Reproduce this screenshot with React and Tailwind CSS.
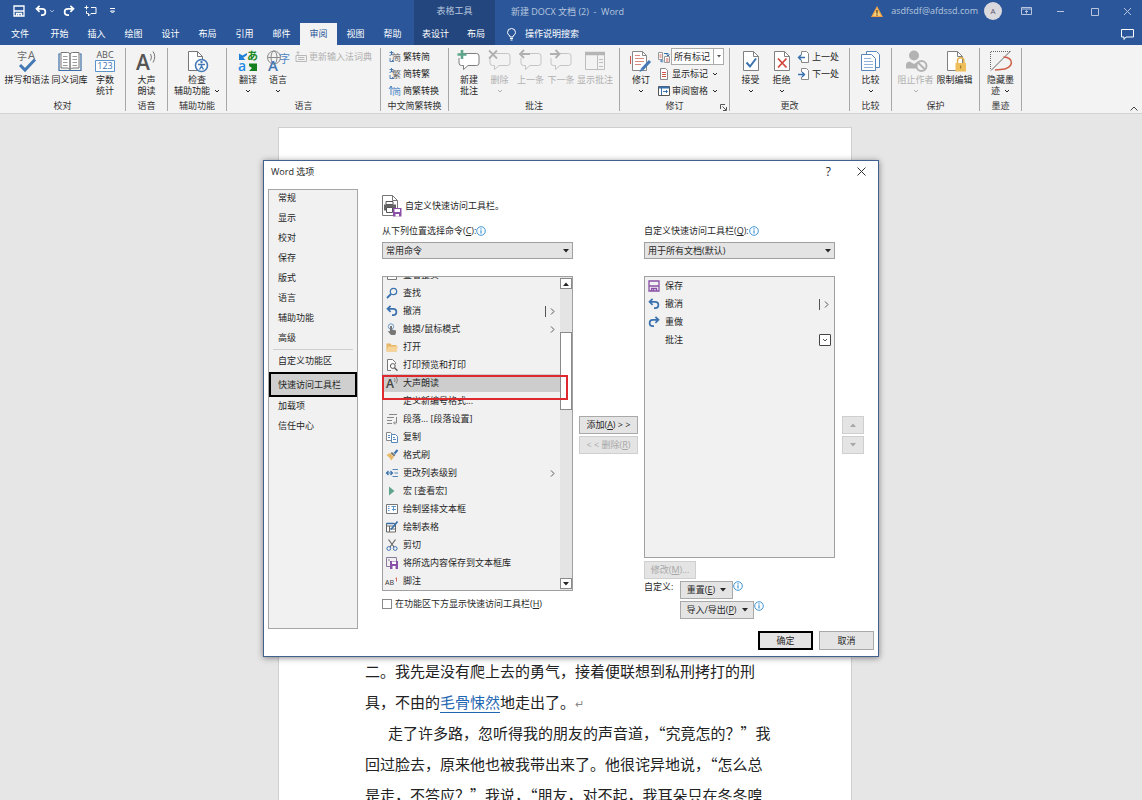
import React, { useState } from 'react';

/* ---------- small shared icons ---------- */

const Chevron = ({ className = '' }) => (
  <svg width="6" height="4" viewBox="0 0 6 4" className={className} fill="none" stroke="currentColor">
    <path d="M1 1l2 2 2-2" />
  </svg>
);

const Triangle = ({ up = false, className = '' }) => (
  <svg width="6" height="4" viewBox="0 0 6 4" className={className} fill="currentColor">
    <path d={up ? 'M0 4l3-3.5L6 4z' : 'M0 0l3 3.5L6 0z'} />
  </svg>
);

const InfoIcon = () => (
  <svg width="10" height="10" viewBox="0 0 10 10" fill="none" stroke="#2b8ad0">
    <circle cx="5" cy="5" r="4.3" strokeWidth="0.9" />
    <path d="M5 4.3V7.6M5 2.3v1.1" strokeWidth="1.1" />
  </svg>
);

const UndoIcon = ({ color = '#3a72b0', flip = false }) => (
  <svg width="12" height="12" viewBox="0 0 12 12" fill="none" stroke={color} strokeWidth="1.7">
    <path
      d="M4.600 0.800L1.500 3.800l3.100 3M1.800 3.800h5.400a3.100 3.100 0 0 1 0 6.400H6"
      transform={flip ? 'translate(12 0) scale(-1 1)' : undefined}
    />
  </svg>
);

const SaveIcon = ({ color }) => (
  <svg width="12" height="12" viewBox="0 0 12 12" fill="none" stroke={color} strokeWidth="1.3">
    <path d="M1 1h10v10H1zM1 6h10M3.500 11V8.500h5V11" />
    <path d="M5.500 9v2" />
  </svg>
);

/* ---------- ribbon icons ---------- */

const SpellIcon = () => (
  <svg width="24" height="24" viewBox="0 0 24 24">
    <text x="2" y="10" fontSize="10" fill="#6a6a6a">字</text>
    <text x="13" y="9" fontSize="11" fill="#6a6a6a">A</text>
    <path d="M5 15l5 5L20 9.500" fill="none" stroke="#4479b5" strokeWidth="3" />
  </svg>
);

const ThesaurusIcon = () => (
  <svg width="24" height="24" viewBox="0 0 24 24" fill="none">
    <path d="M2.500 4h-1.500v16.500h22V4h-1.500" stroke="#3f6fa8" strokeWidth="1.200" />
    <path d="M3 2.500h6.500q2.500 0 2.500 2V19.500q-1-1.500-3-1.500H3zM21 2.500h-6.500q-2.500 0-2.500 2V19.500q1-1.500 3-1.500H21z" fill="#fff" stroke="#777" />
    <path d="M5 6.500h4.500M5 9.500h4.500M5 12.500h4.500M5 15.500h4.500M14.500 6.500H19M14.500 9.500H19M14.500 12.500H19M14.500 15.500H19" stroke="#9a9a9a" />
  </svg>
);

const WordCountIcon = () => (
  <svg width="24" height="24" viewBox="0 0 24 24">
    <text x="12" y="8" fontSize="9" textAnchor="middle" fill="#555">ABC</text>
    <path d="M2.500 10.500h19v11h-19z" fill="#fff" stroke="#5b93cc" />
    <text x="12" y="19" fontSize="9" textAnchor="middle" fill="#3a72b0">123</text>
  </svg>
);

const ReadAloudIcon = () => (
  <svg width="24" height="24" viewBox="0 0 24 24">
    <text x="1" y="20" fontSize="21" fontWeight="600" fill="#555">A</text>
    <path d="M15.500 4q2 3 0 6.500M18 1.500q3.500 5 0 11" fill="none" stroke="#777" />
  </svg>
);

const AccessibilityIcon = () => (
  <svg width="24" height="24" viewBox="0 0 24 24" fill="none">
    <path d="M3.500 1.500h9l5 5v14h-14z" fill="#fff" stroke="#777" />
    <path d="M12.500 1.500v5h5" stroke="#777" />
    <circle cx="16.500" cy="15.500" r="6" fill="#fff" stroke="#4479b5" strokeWidth="1.600" />
    <circle cx="16.500" cy="12" r="1.200" fill="#4479b5" />
    <path d="M13 14.500h7M16.500 14.500v2M16.500 16l-2 3.500M16.500 16l2 3.500" stroke="#4479b5" strokeWidth="1.400" />
  </svg>
);

const TranslateIcon = () => (
  <svg width="24" height="24" viewBox="0 0 24 24">
    <path d="M3 3.500V10h6.500L7.200 7.700 11 5V3L6.500 5.500z" fill="#1f7fd4" />
    <text x="11" y="10" fontSize="11" fontWeight="700" fill="#1e8a28">あ</text>
    <text x="2" y="21" fontSize="14" fontWeight="600" fill="#1f8be6">a</text>
    <path d="M13 13.500h8v7.500h-8l3-3-3-2z" fill="#16801f" />
  </svg>
);

const LanguageIcon = () => (
  <svg width="26" height="24" viewBox="0 0 26 24">
    <g fill="none" stroke="#8a8a8a">
      <circle cx="9" cy="7.500" r="6.500" />
      <ellipse cx="9" cy="7.500" rx="3" ry="6.500" />
      <path d="M2.500 7.500h13" />
    </g>
    <text x="14" y="13" fontSize="11" fill="#4a86c5">字</text>
    <text x="3" y="21" fontSize="15" fontWeight="600" fill="#4479b5">A</text>
  </svg>
);

const Bubble = ({ muted, children }) => (
  <svg width="24" height="24" viewBox="0 0 24 24" fill="none">
    <path
      d="M5.500 3.500h14q2.500 0 2.500 2.500v7q0 2.500-2.500 2.500H11l-4.500 4v-4H4.500Q2 15.500 2 13V8"
      fill={muted ? '#f3f3f3' : '#fff'}
      stroke={muted ? '#c4c4c4' : '#7d7d7d'}
    />
    {children}
  </svg>
);

const NewCommentIcon = () => (
  <Bubble>
    <path d="M5 0v9M0.500 4.500h9" stroke="#5fa58b" strokeWidth="2.600" />
  </Bubble>
);

const DeleteCommentIcon = () => (
  <Bubble muted>
    <path d="M1 0.500l8 8M9 0.500l-8 8" stroke="#b0b0b0" strokeWidth="1.800" />
  </Bubble>
);

const PrevCommentIcon = () => (
  <Bubble muted>
    <path d="M5 0L1 4l4 4M1.500 4H11" stroke="#b0b0b0" strokeWidth="1.800" />
  </Bubble>
);

const NextCommentIcon = () => (
  <Bubble muted>
    <path d="M6.500 0l4 4-4 4M10 4H1" stroke="#b0b0b0" strokeWidth="1.800" />
  </Bubble>
);

const ShowCommentsIcon = () => (
  <svg width="24" height="24" viewBox="0 0 24 24" fill="none" stroke="#bdbdbd">
    <path d="M2.500 2.500h19v17h-19z" />
    <path d="M2 3.500h20" strokeWidth="3.500" stroke="#b5b5b5" />
    <path d="M14.500 5v14M16 9.500h4M16 12.500h4M16 16.500h4" />
  </svg>
);

const TrackIcon = () => (
  <svg width="24" height="24" viewBox="0 0 24 24" fill="none">
    <path d="M3.500 1.500h10l4 4v15h-14z" fill="#fff" stroke="#888" />
    <path d="M13.500 1.500v4h4" stroke="#888" />
    <path d="M6 5.500h5M6 8.500h9M6 11.500h9M6 14.500h6" stroke="#d98a80" />
    <path d="M1.500 6v8" stroke="#d0564a" />
    <path d="M21 11l-8 8.500" stroke="#4479b5" strokeWidth="3" />
    <path d="M12 18.500l-1.500 3.500 3.500-1.500z" fill="#4479b5" />
  </svg>
);

const SheetIcon = ({ children }) => (
  <svg width="24" height="24" viewBox="0 0 24 24" fill="none">
    <path d="M4.500 1.500h10l5 5v14h-15z" fill="#fff" stroke="#808080" />
    <path d="M14.500 1.500v5h5" stroke="#808080" />
    {children}
  </svg>
);

const AcceptIcon = () => (
  <SheetIcon>
    <path d="M7.500 12.500l3.500 4 6-8" stroke="#3a72b0" strokeWidth="2" />
  </SheetIcon>
);

const RejectIcon = () => (
  <SheetIcon>
    <path d="M8 8.500l8.500 9M16.500 8.500l-8.500 9" stroke="#d0493c" strokeWidth="1.800" />
  </SheetIcon>
);

const CompareIcon = () => (
  <svg width="24" height="24" viewBox="0 0 24 24" fill="none" stroke="#5587bd">
    <path d="M7.500 1.500h10l3 3v13h-13z" fill="#fff" />
    <path d="M2.500 4.500h10l4 4v12h-14z" fill="#fff" />
    <path d="M5 8.500h7M5 11.500h9M5 14.500h9M5 17.500h9" stroke="#8fb3d9" />
  </svg>
);

const BlockAuthorsIcon = () => (
  <svg width="24" height="24" viewBox="0 0 24 24">
    <circle cx="10" cy="5.500" r="5" fill="#b3b3b3" />
    <path d="M2 18.500V15q0-3 3.500-3.500l4.500 2.500 4-2.500q2 0 3 2v5z" fill="#b3b3b3" />
    <circle cx="17.500" cy="16" r="5" fill="#f3f3f3" stroke="#b3b3b3" strokeWidth="2" />
    <path d="M14 12.500l7 7" stroke="#b3b3b3" strokeWidth="2" />
  </svg>
);

const RestrictIcon = () => (
  <SheetIcon>
    <path d="M12.500 13H23v8.500H12.500z" fill="#eebf5b" />
    <path d="M14.500 13v-2a3.200 3.200 0 0 1 6.400 0V13" stroke="#e3b04b" strokeWidth="1.500" />
    <path d="M17.700 15.500v3" stroke="#8a6a20" />
  </SheetIcon>
);

const HideInkIcon = () => (
  <svg width="24" height="24" viewBox="0 0 24 24" fill="none">
    <path d="M1.500 19V1.500H21" stroke="#666" strokeDasharray="1 1" />
    <path d="M21.500 1L2 20.500" stroke="#666" />
    <path d="M14.500 7c11 0 11 12-3 12.500L6 20" stroke="#d0604a" strokeWidth="1.600" />
  </svg>
);

/* a character with a small arrow that bends in from the left */
const ConvertIcon = ({ char }) => (
  <svg width="12" height="12" viewBox="0 0 12 12">
    <text x="3" y="10" fontSize="9" fill="#666">{char}</text>
    <path d="M0.500 1.500h4M2.500 0v4M0.500 4.500L4 3M1 7v3.500h3.500M3 9l1.500 1.500" fill="none" stroke="#3a72b0" strokeWidth="0.900" />
  </svg>
);

const BothConvertIcon = () => (
  <svg width="12" height="12" viewBox="0 0 12 12">
    <text x="3" y="10" fontSize="9" fill="#4a86c5">简</text>
    <path d="M2 1v9M0 4l2-3 1.500 3" fill="none" stroke="#4a86c5" />
  </svg>
);

const MarkupIcon = () => (
  <svg width="12" height="12" viewBox="0 0 12 12" fill="none">
    <path d="M0.500 1.500h4v7h-4zM6.500 5.500h5v6h-5z" fill="#fff" stroke="#999" />
    <path d="M1.500 4h2M1.500 6h2M8 8h2.500M8 10h2.500" stroke="#d0564a" />
    <path d="M6 2.500h4v2M8.500 3.500l1.500 1.500 1.500-1.500M5.500 10H3M4 8.500L2.500 10 4 11.500" stroke="#3a72b0" />
  </svg>
);

const ShowMarkupIcon = () => (
  <svg width="12" height="12" viewBox="0 0 12 12" fill="none">
    <path d="M2.500 0.500h5l2 2v9h-7z" fill="#fff" stroke="#888" />
    <path d="M4 4.500h4M4 6.500h4M4 8.500h4" stroke="#d0564a" />
  </svg>
);

const PaneIcon = () => (
  <svg width="12" height="12" viewBox="0 0 12 12" fill="none">
    <path d="M0.500 1.500h11v9H0.500z" fill="#fff" stroke="#555" />
    <path d="M1 2.500h10" stroke="#3a72b0" strokeWidth="2" />
    <path d="M3.500 3v7M5 6.500h4.500M8 5l1.500 1.500L8 8" stroke="#3a72b0" />
  </svg>
);

const ChangeStepIcon = ({ next = false }) => (
  <svg width="12" height="12" viewBox="0 0 12 12" fill="none">
    <path d="M3.500 4V0.500h5l2 2v9h-7V9" fill="#fff" stroke="#888" />
    <path d={next ? 'M0 6.500h6M4 4l2.500 2.500L4 9' : 'M7 6.500H1M3 4L0.500 6.500 3 9'} stroke="#3a72b0" strokeWidth="1.400" />
  </svg>
);

const ImeIcon = () => (
  <svg width="12" height="12" viewBox="0 0 12 12" fill="none" stroke="#b8b8b8">
    <path d="M1 4.500h10.500v6H1zM3 6.500h6.500M3 8.500h6.500M3 4V1M1.500 2L3 0.500 4.500 2" />
  </svg>
);

/* ---------- ribbon parts ---------- */

const BigButton = ({ icon, lines, width, drop, inlineDrop, disabled }) => (
  <button
    disabled={disabled}
    className={`flex ${width} shrink-0 flex-col items-center whitespace-nowrap leading-[11px] ${disabled ? 'text-[#b1b1b1]' : 'text-[#262626]'}`}
  >
    <span className="flex h-[26px] items-end">{icon}</span>
    {lines.map((line, i) => (
      <span key={line} className="flex items-center gap-1">
        {line}
        {inlineDrop && i === lines.length - 1 && <Chevron />}
      </span>
    ))}
    {drop && <Chevron className="mt-[4px]" />}
  </button>
);

const SmallButton = ({ icon, label, drop, disabled }) => (
  <button
    disabled={disabled}
    className={`flex h-[17px] items-center gap-[2px] whitespace-nowrap ${disabled ? 'text-[#b1b1b1]' : 'text-[#262626]'}`}
  >
    {icon}
    <span>{label}</span>
    {drop && <Chevron className="ml-[2px]" />}
  </button>
);

const Group = ({ label, width, launcher, children }) => (
  <section className={`relative flex h-[63px] ${width} shrink-0 flex-col border-r border-[#a8a8a8]`}>
    <div className="flex flex-1 items-start">{children}</div>
    <div className="h-[10px] whitespace-nowrap text-center leading-[10px] text-[#333]">{label}</div>
    {launcher && (
      <button aria-label="修订选项" className="absolute right-[2px] bottom-0 text-[#555]">
        <svg width="7" height="7" viewBox="0 0 7 7" fill="none" stroke="currentColor">
          <path d="M0.500 5V0.500H5M2.500 2.500L6 6M6.500 3v3.500H3" />
        </svg>
      </button>
    )}
  </section>
);

const Ribbon = () => (
  <div className="flex h-[69px] border-b border-[#d2d2d2] bg-[#f3f3f3] pt-[3px]">
    <Group label="校对" width="w-[126px]">
      <div className="flex pl-[5px]">
        <BigButton icon={<SpellIcon />} lines={['拼写和语法']} width="w-[44px]" />
        <BigButton icon={<ThesaurusIcon />} lines={['同义词库']} width="w-[41px]" />
        <BigButton icon={<WordCountIcon />} lines={['字数', '统计']} width="w-[30px]" />
      </div>
    </Group>
    <Group label="语音" width="w-[42px]">
      <BigButton icon={<ReadAloudIcon />} lines={['大声', '朗读']} width="w-full" />
    </Group>
    <Group label="辅助功能" width="w-[59px]">
      <BigButton icon={<AccessibilityIcon />} lines={['检查', '辅助功能']} width="w-full" inlineDrop />
    </Group>
    <Group label="语言" width="w-[154px]">
      <div className="flex pl-[6px]">
        <BigButton icon={<TranslateIcon />} lines={['翻译']} width="w-[30px]" drop />
        <BigButton icon={<LanguageIcon />} lines={['语言']} width="w-[30px]" drop />
        <div className="pl-[2px]">
          <SmallButton icon={<ImeIcon />} label="更新输入法词典" disabled />
        </div>
      </div>
    </Group>
    <Group label="中文简繁转换" width="w-[68px]">
      <div className="flex flex-col pl-[8px]">
        <SmallButton icon={<ConvertIcon char="简" />} label="繁转简" />
        <SmallButton icon={<ConvertIcon char="繁" />} label="简转繁" />
        <SmallButton icon={<BothConvertIcon />} label="简繁转换" />
      </div>
    </Group>
    <Group label="批注" width="w-[171px]">
      <div className="flex pl-[5px]">
        <BigButton icon={<NewCommentIcon />} lines={['新建', '批注']} width="w-[30px]" />
        <BigButton icon={<DeleteCommentIcon />} lines={['删除']} width="w-[31px]" drop disabled />
        <BigButton icon={<PrevCommentIcon />} lines={['上一条']} width="w-[31px]" disabled />
        <BigButton icon={<NextCommentIcon />} lines={['下一条']} width="w-[30px]" disabled />
        <BigButton icon={<ShowCommentsIcon />} lines={['显示批注']} width="w-[38px]" disabled />
      </div>
    </Group>
    <Group label="修订" width="w-[110px]" launcher>
      <div className="flex pl-[6px]">
        <BigButton icon={<TrackIcon />} lines={['修订']} width="w-[30px]" drop />
        <div className="flex flex-col pl-[2px]">
          <div className="flex h-[17px] items-center gap-[1px]">
            <MarkupIcon />
            <div className="relative">
              <select aria-label="标记显示方式" className="h-[17px] w-[53px] appearance-none border border-[#ababab] bg-white pl-[2px] text-[#262626]">
                <option>所有标记</option>
              </select>
              <span className="pointer-events-none absolute inset-y-0 right-0 flex w-[11px] items-center justify-center border-l border-[#ababab] text-[#555]">
                <svg width="4" height="3" viewBox="0 0 4 3" fill="currentColor">
                  <path d="M0 0h4L2 2.500z" />
                </svg>
              </span>
            </div>
          </div>
          <SmallButton icon={<ShowMarkupIcon />} label="显示标记" drop />
          <SmallButton icon={<PaneIcon />} label="审阅窗格" drop />
        </div>
      </div>
    </Group>
    <Group label="更改" width="w-[120px]">
      <div className="flex pl-[5px]">
        <BigButton icon={<AcceptIcon />} lines={['接受']} width="w-[31px]" drop />
        <BigButton icon={<RejectIcon />} lines={['拒绝']} width="w-[31px]" drop />
        <div className="flex flex-col pl-[1px]">
          <SmallButton icon={<ChangeStepIcon />} label="上一处" />
          <SmallButton icon={<ChangeStepIcon next />} label="下一处" />
        </div>
      </div>
    </Group>
    <Group label="比较" width="w-[42px]">
      <BigButton icon={<CompareIcon />} lines={['比较']} width="w-full" drop />
    </Group>
    <Group label="保护" width="w-[88px]">
      <div className="flex pl-[4px]">
        <BigButton icon={<BlockAuthorsIcon />} lines={['阻止作者']} width="w-[39px]" drop disabled />
        <BigButton icon={<RestrictIcon />} lines={['限制编辑']} width="w-[39px]" />
      </div>
    </Group>
    <Group label="墨迹" width="w-[42px]">
      <BigButton icon={<HideInkIcon />} lines={['隐藏墨', '迹']} width="w-full" inlineDrop />
    </Group>
    <button aria-label="折叠功能区" className="mt-auto mr-[4px] mb-[2px] ml-auto text-[#444]">
      <svg width="8" height="5" viewBox="0 0 8 5" fill="none" stroke="currentColor">
        <path d="M0.500 4.500L4 1l3.500 3.500" />
      </svg>
    </button>
  </div>
);

/* ---------- title bar and tabs ---------- */

const TABS = ['开始', '插入', '绘图', '设计', '布局', '引用', '邮件', '审阅', '视图', '帮助'];

const TitleBar = () => (
  <div className="flex h-[23px] items-center text-[#b7c6de]">
    <div className="flex w-[414px] shrink-0 items-center pb-[2px] pl-[13px] text-white">
      <button aria-label="保存"><SaveIcon color="#fff" /></button>
      <button aria-label="撤消" className="ml-[10px]"><UndoIcon color="#fff" /></button>
      <Chevron className="ml-[2px] text-[#9db3d6]" />
      <button aria-label="重做" className="ml-[8px]"><UndoIcon color="#fff" flip /></button>
      <button aria-label="新建批注" className="ml-[9px]">
        <svg width="13" height="12" viewBox="0 0 13 12" fill="none" stroke="#fff">
          <path d="M7 2.500h5v6H7l-2.500 2.500V8.500H2.500V6M2.500 0.500v4M0.500 2.500h4" />
        </svg>
      </button>
      <button aria-label="自定义快速访问工具栏" className="ml-[13px]">
        <svg width="5" height="6" viewBox="0 0 5 6" fill="none" stroke="#fff">
          <path d="M0 0.500h5M0.500 3l2 2 2-2z" />
        </svg>
      </button>
    </div>
    <div className="flex h-full w-[81px] shrink-0 items-center justify-center bg-[#23467f] pb-[2px]">表格工具</div>
    <h1 className="ml-4 whitespace-pre">新建 DOCX 文档 (2)  -  Word</h1>
    <div className="ml-auto flex items-center pb-[1px]">
      <svg width="12" height="11" viewBox="0 0 12 11">
        <path d="M6 0l6 11H0z" fill="#efa044" />
        <path d="M6 2.500l4 7.500H2z" fill="#f7cf7a" />
        <path d="M6 4v3.500M6 8.500v1.200" stroke="#4a3210" strokeWidth="1.200" />
      </svg>
      <span className="ml-[8px]">asdfsdf@afdssd.com</span>
      <span className="ml-[6px] flex h-[18px] w-[18px] items-center justify-center rounded-full bg-[#d9d9de] text-[8px] text-[#5f5670]">A</span>
      <button aria-label="功能区显示选项" className="ml-[19px]">
        <svg width="11" height="8" viewBox="0 0 11 8" fill="none" stroke="#b7c6de">
          <path d="M0.500 0.500h10v7H0.500zM0.500 2h10M5.500 6.500V3.500M4 5l1.500-1.500L7 5" />
        </svg>
      </button>
      <button aria-label="最小化" className="ml-[24px]">
        <svg width="9" height="9" viewBox="0 0 9 9" stroke="#b7c6de"><path d="M1 4.500h7" /></svg>
      </button>
      <button aria-label="最大化" className="ml-[25px]">
        <svg width="9" height="9" viewBox="0 0 9 9" fill="none" stroke="#b7c6de"><path d="M1.500 1.500h7v7h-7z" /></svg>
      </button>
      <button aria-label="关闭" className="mr-[10px] ml-[24px]">
        <svg width="9" height="9" viewBox="0 0 9 9" stroke="#b7c6de"><path d="M1 1l7 7M8 1L1 8" /></svg>
      </button>
    </div>
  </div>
);

const TabBar = () => {
  const [active, setActive] = useState('审阅');

  return (
    <nav className="flex h-[22px] text-white">
      <button className="w-[41px] pl-[11px] text-left">文件</button>
      {TABS.map((tab) => (
        <button
          key={tab}
          onClick={() => setActive(tab)}
          className={`w-[37px] ${active === tab ? 'bg-[#f3f3f3] text-[#2b579a]' : ''}`}
        >
          {tab}
        </button>
      ))}
      <div className="ml-[3px] flex w-[81px] bg-[#23467f]">
        <button className="w-[43px]">表设计</button>
        <button className="w-[38px]">布局</button>
      </div>
      <button className="ml-[12px] flex items-center gap-[9px]">
        <svg width="9" height="13" viewBox="0 0 9 13" fill="none" stroke="#fff">
          <path d="M3 9V8Q0.500 6.500 0.500 4.500a4 4 0 0 1 8 0Q8.500 6.500 6 8v1zM3 10.500h3M3.500 12h2" />
        </svg>
        操作说明搜索
      </button>
      <button aria-label="批注" className="mr-[8px] ml-auto">
        <svg width="13" height="11" viewBox="0 0 13 11" fill="none" stroke="#fff">
          <path d="M0.500 0.500h12v7.500H5l-2 2.500V8H0.500z" />
        </svg>
      </button>
    </nav>
  );
};

/* ---------- dialog icons ---------- */

const ListSvg = ({ children }) => (
  <svg width="12" height="12" viewBox="0 0 12 12" fill="none">{children}</svg>
);

const LIST_ICONS = {
  page: (
    <ListSvg><path d="M1.500 1.500h9v9h-9z" fill="#fff" stroke="#777" /></ListSvg>
  ),
  find: (
    <ListSvg>
      <circle cx="7.500" cy="4.500" r="3.200" stroke="#3a72b0" strokeWidth="1.200" />
      <path d="M5 7l-4 4" stroke="#3a72b0" strokeWidth="1.800" />
    </ListSvg>
  ),
  undo: <UndoIcon />,
  redo: <UndoIcon flip />,
  save: <SaveIcon color="#8a4fa8" />,
  touch: (
    <ListSvg>
      <circle cx="5" cy="3.500" r="2.700" stroke="#6b9ccc" />
      <path d="M4 3h2v3.500l4 1V10l-1 2H5L2 8.500l1-.7 1 .7z" fill="#777" />
    </ListSvg>
  ),
  open: (
    <ListSvg>
      <path d="M0.500 10.500v-8h4l1 1.500h5v6.500z" fill="#e6b566" />
      <path d="M0.500 10.500L2 5.500h10l-1.500 5z" fill="#f6d396" />
    </ListSvg>
  ),
  preview: (
    <ListSvg>
      <path d="M5 11.500H1.500v-11h5l3 3V5" fill="#fff" stroke="#777" />
      <circle cx="6.800" cy="7" r="2.400" fill="#fff" stroke="#555" />
      <path d="M8.500 8.700l3 3" stroke="#555" strokeWidth="1.300" />
    </ListSvg>
  ),
  read: (
    <ListSvg>
      <text x="0" y="11" fontSize="12" fontWeight="600" fill="#444">A</text>
      <path d="M8.500 1.500q1.200 1.500 0 3.500M10.300 0q2.200 3 0 6.500" stroke="#777" strokeWidth="0.900" />
    </ListSvg>
  ),
  paragraph: (
    <ListSvg>
      <path d="M3 1.500h8M1 4.500h7M1 7.500h5M1 10.500h5M10.500 4v6H8M9 8.500L7.500 10 9 11.500" stroke="#888" />
    </ListSvg>
  ),
  copy: (
    <ListSvg>
      <path d="M0.500 1.500h4l2 2v6h-6z" fill="#fff" stroke="#888" />
      <path d="M5.500 3.500h4l2 2v6h-6z" fill="#fff" stroke="#5587bd" />
      <path d="M7 6.500h2M7 8.500h3M2 4.500h2M2 6.500h2" stroke="#5587bd" />
    </ListSvg>
  ),
  painter: (
    <ListSvg>
      <path d="M0.500 6L4 4l4 4-3 3.500q-1-3-4.500-5.500z" fill="#e9b968" />
      <path d="M4.500 4l3.500 3.500 1.500-1.500-3.500-3z" fill="#777" />
      <path d="M8.500 4.500L11.500 1" stroke="#3a72b0" strokeWidth="2" />
    </ListSvg>
  ),
  level: (
    <ListSvg>
      <path d="M0.500 6h6M2.500 4L0.500 6l2 2M4.500 4l2 2-2 2" stroke="#3a72b0" strokeWidth="1.200" />
      <path d="M6.500 2.500H12M8.500 6H12M6.500 9.500H12" stroke="#5587bd" />
    </ListSvg>
  ),
  macro: (
    <ListSvg><path d="M3 1.500L8.500 6 3 10.500z" fill="#5fa58b" /></ListSvg>
  ),
  textbox: (
    <ListSvg>
      <path d="M0.500 1.500h11v9H0.500z" fill="#fff" stroke="#777" />
      <path d="M5.500 3.500h4.500M7.500 3.500v4.500M6 6.500h4M2 3.500h1.500M2 5.500h1.500M2 7.500h1.500" stroke="#5b93cc" />
    </ListSvg>
  ),
  table: (
    <ListSvg>
      <path d="M0.500 2.500h9v8.500h-9zM0.500 5h9M3.500 5v6M3.500 8h6" fill="#fff" stroke="#666" />
      <path d="M0.500 2.500h7" stroke="#3a72b0" strokeWidth="1.600" />
      <path d="M11.500 0.500L5 8.500" stroke="#3a72b0" strokeWidth="1.800" />
    </ListSvg>
  ),
  cut: (
    <ListSvg>
      <path d="M2.500 0.500L8 8M9.500 0.500L4 8" stroke="#666" strokeWidth="1.200" />
      <circle cx="2.800" cy="9.500" r="1.900" stroke="#3a72b0" />
      <circle cx="9.200" cy="9.500" r="1.900" stroke="#3a72b0" />
    </ListSvg>
  ),
  gallery: (
    <ListSvg>
      <path d="M0.500 0.500h10v9H0.500zM2 3h2" stroke="#8a7a99" />
      <path d="M4 4h8v8H4z" fill="#8a4fa8" />
      <path d="M6 4.500h4v2.500H6zM6.500 9h3v3h-3z" fill="#fff" />
    </ListSvg>
  ),
  footnote: (
    <ListSvg>
      <text x="-1" y="10" fontSize="7" fill="#333">AB</text>
      <path d="M10.500 3v3.500M9.500 3.500l1-.7" stroke="#d0564a" strokeWidth="0.900" />
    </ListSvg>
  ),
};

/* ---------- dialog parts ---------- */

const COMMANDS = [
  { label: '查看整页', icon: 'page' },
  { label: '查找', icon: 'find' },
  { label: '撤消', icon: 'undo', split: true, more: true },
  { label: '触摸/鼠标模式', icon: 'touch', more: true },
  { label: '打开', icon: 'open' },
  { label: '打印预览和打印', icon: 'preview' },
  { label: '大声朗读', icon: 'read' },
  { label: '定义新编号格式...' },
  { label: '段落... [段落设置]', icon: 'paragraph' },
  { label: '复制', icon: 'copy' },
  { label: '格式刷', icon: 'painter' },
  { label: '更改列表级别', icon: 'level', more: true },
  { label: '宏 [查看宏]', icon: 'macro' },
  { label: '绘制竖排文本框', icon: 'textbox' },
  { label: '绘制表格', icon: 'table' },
  { label: '剪切', icon: 'cut' },
  { label: '将所选内容保存到文本框库', icon: 'gallery' },
  { label: '脚注', icon: 'footnote' },
];

const TOOLBAR_ITEMS = [
  { label: '保存', icon: 'save' },
  { label: '撤消', icon: 'undo', split: true, more: true },
  { label: '重做', icon: 'redo' },
  { label: '批注', drop: true },
];

const CommandRow = ({ item, selected, onClick }) => (
  <li className="shrink-0">
    <button
      onClick={onClick}
      className={`flex h-[18px] w-full items-center pr-[3px] pl-[2px] text-left ${selected ? 'bg-[#cdcdcd]' : ''}`}
    >
      <span className="flex w-[14px] shrink-0 justify-center">{item.icon && LIST_ICONS[item.icon]}</span>
      <span className="ml-[4px] flex-1 whitespace-nowrap">{item.label}</span>
      {item.split && <span className="mr-[3px] h-[11px] w-px bg-[#555]" />}
      {item.more && (
        <svg width="7" height="7" viewBox="0 0 7 7" fill="none" stroke="#555" className="mr-[1px]">
          <path d="M2 0.500l3 3-3 3" />
        </svg>
      )}
      {item.drop && (
        <span className="flex h-[12px] w-[12px] items-center justify-center rounded-[1px] border border-[#444] bg-white">
          <Chevron className="text-[#555]" />
        </span>
      )}
    </button>
  </li>
);

const GrayButton = ({ disabled, className = '', children, ...rest }) => (
  <button
    disabled={disabled}
    className={`flex h-[18px] items-center justify-center whitespace-nowrap border ${
      disabled ? 'border-[#cfcfcf] bg-[#e4e4e4] text-[#a8a8a8]' : 'border-[#a9a9a9] bg-[#e4e4e4] text-[#262626]'
    } ${className}`}
    {...rest}
  >
    {children}
  </button>
);

const LabeledSelect = ({ id, label, accel, value }) => (
  <>
    <div className="flex h-4 items-center whitespace-nowrap">
      <label htmlFor={id}>{label}(<u>{accel}</u>):</label>
      <InfoIcon />
    </div>
    <div className="relative mt-[3px]">
      <select id={id} className="block h-[17px] w-full appearance-none border border-[#a0a0a0] bg-[#e4e4e4] pl-[3px]">
        <option>{value}</option>
      </select>
      <Triangle className="pointer-events-none absolute top-[7px] right-[4px]" />
    </div>
  </>
);

const SECTIONS = ['常规', '显示', '校对', '保存', '版式', '语言', '辅助功能', '高级'];

const Sidebar = () => (
  <aside className="ml-[4px] h-[440px] w-[90px] shrink-0 border border-[#a6a6a6] bg-[#f1f1f1]">
    <ul className="flex flex-col gap-1">
      {SECTIONS.map((name) => (
        <li key={name} className="flex h-4">
          <button className="pl-[9px]">{name}</button>
        </li>
      ))}
    </ul>
    <hr className="mx-[4px] mt-[3px] border-[#cfcfcf]" />
    <button className="mt-[3px] block h-4 pl-[9px]">自定义功能区</button>
    <button className="mt-[3px] block h-[25px] w-full border-2 border-black bg-[#cfcfcf] pl-[7px] text-left">快速访问工具栏</button>
    <ul className="mt-[1px] flex flex-col gap-1">
      <li className="flex h-4"><button className="pl-[9px]">加载项</button></li>
      <li className="flex h-4"><button className="pl-[9px]">信任中心</button></li>
    </ul>
  </aside>
);

const CommandList = () => {
  const [selected, setSelected] = useState('大声朗读');

  return (
    <div className="relative mt-[17px] flex h-[315px] border border-[#a0a0a0] bg-[#f1f1f1]">
      <ul className="flex flex-1 flex-col justify-end overflow-hidden">
        {COMMANDS.map((item) => (
          <CommandRow key={item.label} item={item} selected={selected === item.label} onClick={() => setSelected(item.label)} />
        ))}
      </ul>
      <div className="flex w-[12px] flex-col bg-[#e4e4e4] py-[1px]">
        <button aria-label="向上滚动" className="flex h-[11px] items-center justify-center border border-[#8a8a8a] bg-white">
          <Triangle up />
        </button>
        <div className="mt-[43px] h-[78px] border border-[#8a8a8a] bg-white" />
        <button aria-label="向下滚动" className="mt-auto flex h-[11px] items-center justify-center border border-[#8a8a8a] bg-white">
          <Triangle />
        </button>
      </div>
      {/* highlight frame round the selected command */}
      <div className="pointer-events-none absolute top-[98px] -left-px h-[25px] w-[186px] border-2 border-[#dc2a2f]" />
    </div>
  );
};

const OptionsDialog = () => (
  <div
    role="dialog"
    aria-label="Word 选项"
    className="w-[616px] border border-[#41608f] bg-white text-[#262626] shadow-[0_1px_6px_rgba(0,0,0,0.45)]"
  >
    <div className="mb-[7px] flex h-[21px] items-center pl-[7px]">
      <h2>Word 选项</h2>
      <button className="ml-auto text-[12px] leading-[20px]">?</button>
      <button aria-label="关闭" className="mr-[12px] ml-[26px]">
        <svg width="9" height="9" viewBox="0 0 9 9" stroke="#333"><path d="M0.500 0.500l8 8M8.500 0.500l-8 8" /></svg>
      </button>
    </div>

    <div className="flex">
      <Sidebar />
      <div className="ml-[24px] flex flex-1 flex-col pt-[6px]">
        <div className="flex h-[22px] items-center gap-[3px]">
          <svg width="20" height="22" viewBox="0 0 20 22" fill="none">
            <path d="M0.500 0.500h10l5 5v15h-15z" fill="#fff" stroke="#777" />
            <path d="M10.500 0.500v5h5" stroke="#777" />
            <path d="M4 6.500h7v3H4z" fill="#fff" stroke="#555" />
            <path d="M2 9.500h12v6H2z" fill="#666" />
            <path d="M4.500 12.500h6v5h-6z" fill="#fff" stroke="#555" />
            <path d="M11 13h8.500v8.500H11z" fill="#8a4fa8" />
            <path d="M12.500 14h5.500v3h-5.500zM13.500 19h3.500v2.500h-3.500z" fill="#fff" />
          </svg>
          <h3>自定义快速访问工具栏。</h3>
        </div>

        <div className="mt-[6px] flex">
          <div className="w-[191px] shrink-0">
            <LabeledSelect id="source" label="从下列位置选择命令" accel="C" value="常用命令" />
            <CommandList />
            <label className="mt-[6px] flex h-[14px] items-center gap-[3px] whitespace-nowrap">
              <input type="checkbox" className="h-[10px] w-[10px] appearance-none border border-[#8a8a8a] bg-white" />
              <span>在功能区下方显示快速访问工具栏(<u>H</u>)</span>
            </label>
          </div>

          <div className="flex w-[71px] shrink-0 flex-col gap-[2px] px-[6px] pt-[193px]">
            <GrayButton>添加(<u>A</u>)&nbsp;&gt;&nbsp;&gt;</GrayButton>
            <GrayButton disabled>&lt;&nbsp;&lt;&nbsp;删除(<u>R</u>)</GrayButton>
          </div>

          <div className="w-[191px] shrink-0">
            <LabeledSelect id="target" label="自定义快速访问工具栏" accel="Q" value="用于所有文档(默认)" />
            <ul className="mt-[17px] h-[282px] border border-[#a0a0a0] bg-[#f1f1f1]">
              {TOOLBAR_ITEMS.map((item) => (
                <CommandRow key={item.label} item={item} />
              ))}
            </ul>
            <GrayButton disabled className="mt-[3px] w-[52px]">修改(<u>M</u>)...</GrayButton>
            <div className="mt-[2px] flex">
              <span className="w-[36px] shrink-0 leading-[12px] whitespace-nowrap">自定义:</span>
              <div className="flex flex-col gap-[2px]">
                <div className="flex">
                  <GrayButton className="w-[53px] gap-[5px]"><span>重置(<u>E</u>)</span><Triangle /></GrayButton>
                  <InfoIcon />
                </div>
                <div className="flex">
                  <GrayButton className="w-[74px] gap-[5px]"><span>导入/导出(<u>P</u>)</span><Triangle /></GrayButton>
                  <InfoIcon />
                </div>
              </div>
            </div>
          </div>

          <div className="ml-[7px] flex w-[22px] flex-col gap-[2px] pt-[193px]">
            <GrayButton disabled aria-label="上移"><Triangle up /></GrayButton>
            <GrayButton disabled aria-label="下移"><Triangle /></GrayButton>
          </div>
        </div>
      </div>
    </div>

    <div className="mt-[2px] flex justify-end gap-[6px] pr-[4px] pb-[6px]">
      <button className="h-[19px] w-[55px] border-2 border-black bg-[#e4e4e4]">确定</button>
      <button className="h-[19px] w-[55px] border border-[#a9a9a9] bg-[#e4e4e4]">取消</button>
    </div>
  </div>
);

/* ---------- document ---------- */

const DocumentPage = () => (
  <main className="flex-1 overflow-hidden bg-[#e6e6e6] pt-[13px] pr-[12px]">
    <article className="mx-auto h-full w-[574px] border border-b-0 border-[#cfcfcf] bg-white pt-[527px] pl-[86px] text-[15px] leading-[31px] whitespace-nowrap text-[#222] [font-family:'Noto_Sans_CJK_SC',sans-serif]">
      <p>
        二。我先是没有爬上去的勇气，接着便联想到私刑拷打的刑
        <br />
        具，不由的
        <a href="#idiom" className="text-[#1f66b3] underline underline-offset-4">毛骨悚然</a>
        地走出了。<span className="text-[11px] leading-none text-[#888]">↵</span>
      </p>
      <p className="indent-[23px]">
        走了许多路，忽听得我的朋友的声音道，“究竟怎的？”我
        <br />
        回过脸去，原来他也被我带出来了。他很诧异地说，“怎么总
        <br />
        是走，不答应？”我说，“朋友，对不起，我耳朵只在冬冬喤
      </p>
    </article>
  </main>
);

const App = () => (
  <div lang="zh-CN" className="relative flex h-screen flex-col overflow-hidden text-[9px] [font-family:'Open_Sans','Noto_Sans_CJK_SC',sans-serif] [&_svg]:shrink-0 [&_svg]:overflow-visible">
    <header className="bg-[#2b579a]">
      <TitleBar />
      <TabBar />
    </header>
    <Ribbon />
    <DocumentPage />
    <div className="absolute inset-0 flex items-start justify-center pt-[160px]">
      <OptionsDialog />
    </div>
  </div>
);

export default App;
